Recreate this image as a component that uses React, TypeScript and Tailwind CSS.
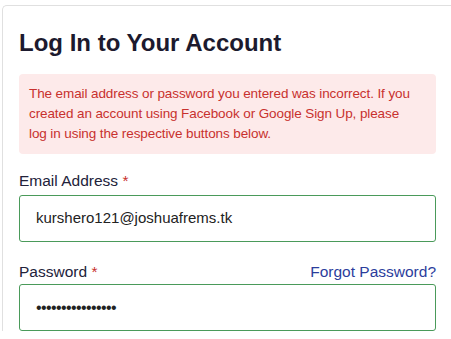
export default function App() {
  return (
    <div className="min-h-screen overflow-hidden bg-white pl-[2px] pt-[5px] font-['Liberation_Sans',Arial,sans-serif]">
      <div className="w-[470px] rounded-tl-[5px] border-l border-t border-[#e0e0e0] pl-[16px] pr-[36px] pt-[22px]">
        <h1 className="text-[24px] font-bold leading-[30px] text-[#1c1a2e]">
          Log In to Your Account
        </h1>

        {/* error */}
        <div className="mt-[16px] rounded-[4px] bg-[#fdeaea] px-[10px] py-[10px] text-[13.5px] leading-[20px] tracking-[-0.1px] text-[#c8312e]">
          The email address or password you entered was incorrect. If you created an account
          using Facebook or Google Sign Up, please
          <br />
          log in using the respective buttons below.
        </div>

        {/* email */}
        <div className="mt-[17px]">
          <label className="block text-[15.5px] leading-[20px] text-[#22223a]">
            Email Address <span className="text-[#c8312e]">*</span>
          </label>
          <div className="mt-[4px] flex h-[47px] items-center rounded-[3px] border border-[#4a9a5a] px-[16px] text-[15px] text-[#222]">
            kurshero121@joshuafrems.tk
          </div>
        </div>

        {/* password */}
        <div className="mt-[20px]">
          <div className="flex items-center justify-between">
            <label className="block text-[15.5px] leading-[20px] text-[#22223a]">
              Password <span className="text-[#c8312e]">*</span>
            </label>
            <a className="text-[15.5px] leading-[20px] text-[#2b3d9c]">Forgot Password?</a>
          </div>
          <div className="mt-[2px] flex h-[47px] items-center rounded-[3px] border border-[#4a9a5a] px-[16px] text-[16px] tracking-[-0.6px] text-[#222]">
            ••••••••••••••••
          </div>
        </div>
      </div>
    </div>
  );
}
